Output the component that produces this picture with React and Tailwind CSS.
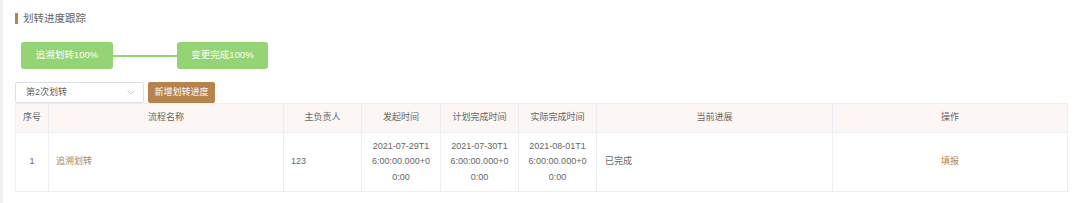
import React from "react";

const font = { fontFamily: '"Liberation Sans", "Noto Sans CJK SC", sans-serif' };

const cols = [33, 235, 78, 79, 78, 78, 236, 235];
const headers = ["序号", "流程名称", "主负责人", "发起时间", "计划完成时间", "实际完成时间", "当前进展", "操作"];

export default function App() {
  return (
    <div className="w-[1080px] h-[203px] flex bg-white overflow-hidden" style={font}>
      <div className="w-[3px] bg-[#eef0f3] shrink-0" />
      <div className="flex-1 flex flex-col pl-[12px] pr-[10px]">
        <div className="h-[36px] flex items-center pt-[1px]">
          <div className="w-[3px] h-[11px] bg-[#b5834b]" />
          <span className="ml-[5px] text-[10.5px] text-[#666]">划转进度跟踪</span>
        </div>
        <div className="mt-[6px] ml-[6px] flex items-center h-[27px]">
          <div className="w-[92px] h-[27px] rounded-[3px] bg-[#95d475] text-white text-[9.5px] flex items-center justify-center">追溯划转100%</div>
          <div className="w-[64px] h-[2px] bg-[#95d475]" />
          <div className="w-[91px] h-[27px] rounded-[3px] bg-[#95d475] text-white text-[9.5px] flex items-center justify-center">变更完成100%</div>
        </div>
        <div className="mt-[13px] flex items-center gap-[4px] h-[21px]">
          <div className="w-[129px] h-[21px] border border-[#dcdfe6] rounded-[2px] flex items-center justify-between pl-[10px] pr-[8px] text-[9px] text-[#606266]">
            <span>第2次划转</span>
            <svg width="8" height="5" viewBox="0 0 8 5" fill="none"><path d="M0.5 0.5 L4 4 L7.5 0.5" stroke="#c0c4cc" strokeWidth="0.9" /></svg>
          </div>
          <div className="w-[67px] h-[21px] rounded-[2px] bg-[#b5834b] text-white text-[9px] flex items-center justify-center">新增划转进度</div>
        </div>
        <table className="table-fixed border-collapse w-[1052px] text-[9px] text-[#666]">
          <colgroup>
            {cols.map((w, i) => (
              <col key={i} style={{ width: w }} />
            ))}
          </colgroup>
          <thead>
            <tr className="h-[29px] bg-[#fcf7f5]">
              {headers.map((h) => (
                <th key={h} className="border border-[#ebeef5] font-normal text-center px-[4px]">{h}</th>
              ))}
            </tr>
          </thead>
          <tbody>
            <tr className="h-[59px]">
              <td className="border border-[#ebeef5] text-center">1</td>
              <td className="border border-[#ebeef5] pl-[7px] text-[#b5834b]">追溯划转</td>
              <td className="border border-[#ebeef5] pl-[7px]">123</td>
              {["2021-07-29T16:00:00.000+00:00", "2021-07-30T16:00:00.000+00:00", "2021-08-01T16:00:00.000+00:00"].map((d) => (
                <td key={d} className="border border-[#ebeef5] text-center px-[9px] break-all leading-[15.3px]">{d}</td>
              ))}
              <td className="border border-[#ebeef5] pl-[8px]">已完成</td>
              <td className="border border-[#ebeef5] text-center text-[#b5834b]">填报</td>
            </tr>
          </tbody>
        </table>
      </div>
    </div>
  );
}
